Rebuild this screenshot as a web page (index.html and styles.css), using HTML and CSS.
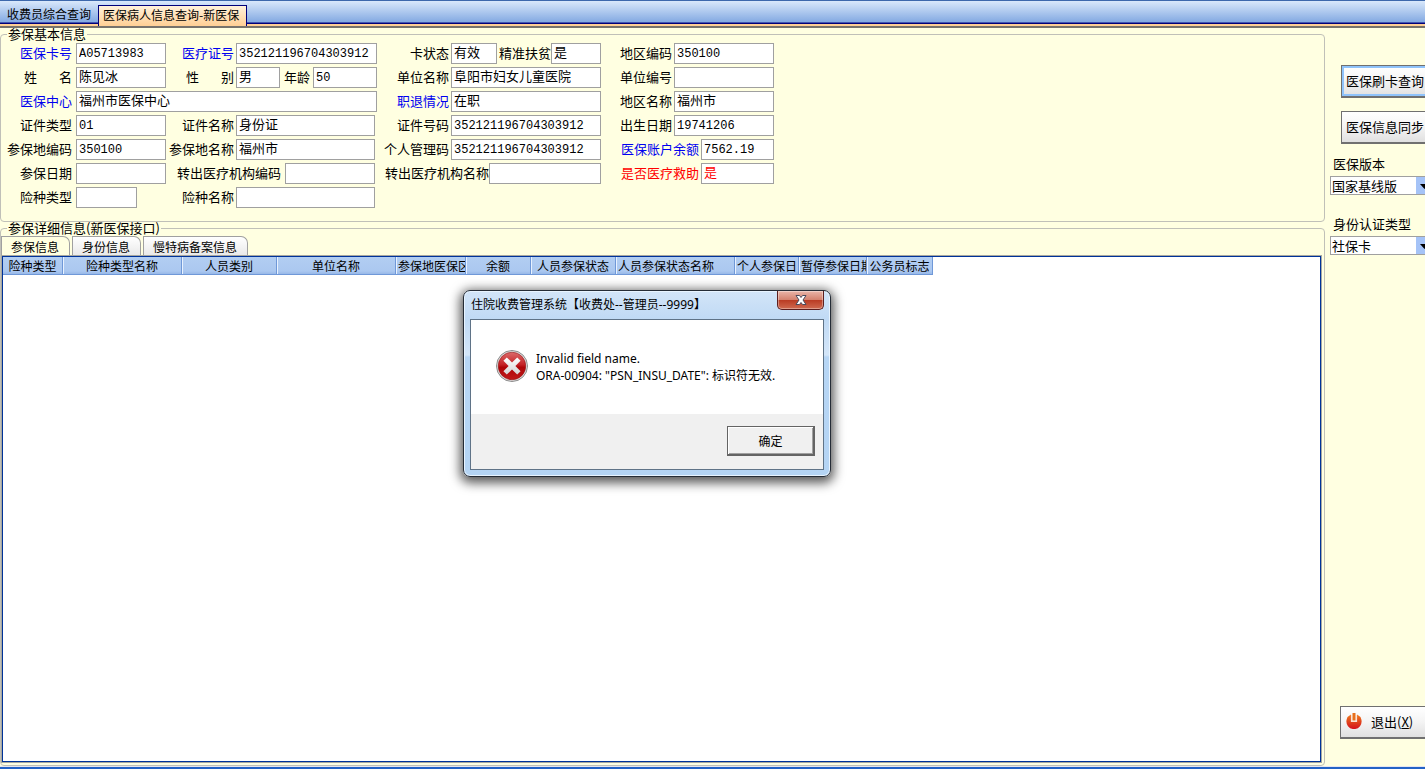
FILE: index.html
```html
<!DOCTYPE html>
<html lang="zh-CN">
<head>
  <meta charset="UTF-8">
  <meta name="viewport" content="width=device-width, initial-scale=1.0">
  <title>医保病人信息查询-新医保</title>
  <link rel="stylesheet" href="styles.css">
</head>
<body>
  <nav class="window-tabs">
    <button class="window-tab" type="button">收费员综合查询</button>
    <button class="window-tab active" type="button">医保病人信息查询-新医保</button>
  </nav>

  <div class="workspace">
    <main class="main">
      <fieldset class="group basic">
        <legend>参保基本信息</legend>
        <div class="form-grid">
          <!-- row 1 -->
          <div class="cell c1"><label class="blue" for="cardNo">医保卡号</label><input class="num fill" id="cardNo" value="A05713983"></div>
          <div class="cell c2"><label class="blue" for="certNo">医疗证号</label><input class="num fill" id="certNo" value="352121196704303912"></div>
          <div class="cell c3"><label for="cardState">卡状态</label><input class="w46" id="cardState" value="有效"><label class="inline" for="poverty">精准扶贫</label><input class="fill" id="poverty" value="是"></div>
          <div class="cell c4"><label for="areaCode">地区编码</label><input class="num fill" id="areaCode" value="350100"></div>
          <!-- row 2 -->
          <div class="cell c1"><label for="name">姓&emsp;&ensp;&thinsp;名</label><input class="fill" id="name" value="陈见冰"></div>
          <div class="cell c2"><label for="sex">性&emsp;&ensp;&thinsp;别</label><input class="w44" id="sex" value="男"><label class="inline" for="age">年龄</label><input class="num fill" id="age" value="50"></div>
          <div class="cell c3"><label for="unitName">单位名称</label><input class="fill" id="unitName" value="阜阳市妇女儿童医院"></div>
          <div class="cell c4"><label for="unitNo">单位编号</label><input class="fill" id="unitNo"></div>
          <!-- row 3 -->
          <div class="cell c1 span2"><label class="blue" for="center">医保中心</label><input class="fill" id="center" value="福州市医保中心"></div>
          <div class="cell c3"><label class="blue" for="retire">职退情况</label><input class="fill" id="retire" value="在职"></div>
          <div class="cell c4"><label for="areaName">地区名称</label><input class="fill" id="areaName" value="福州市"></div>
          <!-- row 4 -->
          <div class="cell c1"><label for="idType">证件类型</label><input class="num fill" id="idType" value="01"></div>
          <div class="cell c2 short"><label for="idName">证件名称</label><input class="fill" id="idName" value="身份证"></div>
          <div class="cell c3"><label for="idNo">证件号码</label><input class="num fill" id="idNo" value="352121196704303912"></div>
          <div class="cell c4"><label for="birth">出生日期</label><input class="num fill" id="birth" value="19741206"></div>
          <!-- row 5 -->
          <div class="cell c1"><label for="insuCode">参保地编码</label><input class="num fill" id="insuCode" value="350100"></div>
          <div class="cell c2 short"><label for="insuArea">参保地名称</label><input class="fill" id="insuArea" value="福州市"></div>
          <div class="cell c3"><label for="personNo">个人管理码</label><input class="num fill" id="personNo" value="352121196704303912"></div>
          <div class="cell c4"><label class="blue long" for="balance">医保账户余额</label><input class="num fill" id="balance" value="7562.19"></div>
          <!-- row 6 -->
          <div class="cell c1"><label for="insuDate">参保日期</label><input class="fill" id="insuDate"></div>
          <div class="cell c2 short"><label class="long" for="outCode">转出医疗机构编码</label><input class="fill" id="outCode"></div>
          <div class="cell c3 tight"><label class="long" for="outName">转出医疗机构名称</label><input class="fill" id="outName"></div>
          <div class="cell c4"><label class="red long" for="rescue">是否医疗救助</label><input class="red fill" id="rescue" value="是"></div>
          <!-- row 7 -->
          <div class="cell c1"><label for="kindType">险种类型</label><input class="w60" id="kindType"></div>
          <div class="cell c2 short"><label for="kindName">险种名称</label><input class="fill" id="kindName"></div>
        </div>
      </fieldset>

      <fieldset class="group detail">
        <legend>参保详细信息(新医保接口)</legend>
        <div class="sub-tabs">
          <button class="sub-tab active" type="button">参保信息</button>
          <button class="sub-tab" type="button">身份信息</button>
          <button class="sub-tab" type="button">慢特病备案信息</button>
        </div>
        <div class="grid-box">
          <table>
            <colgroup>
              <col class="col-60"><col class="col-119"><col class="col-95"><col class="col-119">
              <col class="col-70"><col class="col-65"><col class="col-85"><col class="col-119">
              <col class="col-64"><col class="col-68"><col class="col-66">
            </colgroup>
            <thead>
              <tr>
                <th>险种类型</th>
                <th>险种类型名称</th>
                <th>人员类别</th>
                <th>单位名称</th>
                <th class="left">参保地医保区</th>
                <th>余额</th>
                <th>人员参保状态</th>
                <th class="left">人员参保状态名称</th>
                <th class="left">个人参保日</th>
                <th class="left">暂停参保日期</th>
                <th>公务员标志</th>
              </tr>
            </thead>
          </table>
        </div>
      </fieldset>
    </main>

    <aside class="side">
      <button class="btn focused" type="button">医保刷卡查询</button>
      <button class="btn" type="button">医保信息同步</button>
      <label class="side-label" for="version">医保版本</label>
      <div class="combo">
        <select id="version"><option>国家基线版</option></select>
        <svg width="17" height="17" viewBox="0 0 17 17"><rect width="17" height="17" fill="#a5c3f7"/><path d="M4 7h9L8.500 12z" fill="#000"/></svg>
      </div>
      <label class="side-label second" for="authType">身份认证类型</label>
      <div class="combo">
        <select id="authType"><option>社保卡</option></select>
        <svg width="17" height="17" viewBox="0 0 17 17"><rect width="17" height="17" fill="#a5c3f7"/><path d="M4 7h9L8.500 12z" fill="#000"/></svg>
      </div>
      <button class="btn exit" type="button">
        <svg width="16" height="16" viewBox="0 0 16 16">
          <defs>
            <linearGradient id="power" x1="0" y1="0" x2="0" y2="1">
              <stop offset="0" stop-color="#ee7a1c"/>
              <stop offset="1" stop-color="#d4101c"/>
            </linearGradient>
          </defs>
          <path d="M5 1.500A7.600 7.600 0 1 0 11 1.500V8.500H5z" fill="url(#power)"/>
          <path d="M5.500 2v6.500h5V2" fill="none" stroke="#fbe3d6" stroke-width="1.200"/>
          <rect x="6.500" y="0" width="3" height="7.500" fill="#e8701c"/>
        </svg>
        <span>退出(<u>X</u>)</span>
      </button>
    </aside>
  </div>

  <div class="status-line"></div>

  <div class="dialog" role="alertdialog" aria-labelledby="dialogTitle">
    <div class="dialog-title">
      <span id="dialogTitle">住院收费管理系统【收费处--管理员--9999】</span>
      <button class="dialog-close" type="button" aria-label="关闭">
        <svg width="12" height="10" viewBox="0 0 12 10">
          <path d="M1 .5h3.500L6 2.500 7.500.5H11L8 5l3 4.500H7.500L6 7.500 4.500 9.500H1L4 5z" fill="#fff" stroke="#4a4a5c" stroke-width="1"/>
        </svg>
      </button>
    </div>
    <div class="dialog-client">
      <div class="dialog-body">
        <svg width="32" height="32" viewBox="0 0 32 32">
          <defs>
            <linearGradient id="err" x1="0" y1="0" x2="0" y2="1">
              <stop offset="0" stop-color="#dc6a6a"/>
              <stop offset=".45" stop-color="#c42226"/>
              <stop offset=".55" stop-color="#ae0508"/>
              <stop offset="1" stop-color="#c01a1a"/>
            </linearGradient>
            <linearGradient id="cross" x1="0" y1="0" x2="0" y2="1">
              <stop offset="0" stop-color="#fff"/>
              <stop offset="1" stop-color="#d4d4d4"/>
            </linearGradient>
          </defs>
          <circle cx="16" cy="16" r="15.500" fill="#e4e4e4" stroke="#8c8c8c"/>
          <circle cx="16" cy="16" r="13.800" fill="url(#err)" stroke="#8e1214" stroke-width=".6"/>
          <path d="M10.800 7.400L16 12.600l5.200-5.200 3.400 3.400L19.400 16l5.200 5.200-3.400 3.400L16 19.400l-5.200 5.200-3.400-3.400L12.600 16l-5.200-5.200z" fill="url(#cross)"/>
        </svg>
        <p>Invalid field name.<br>ORA-00904: "PSN_INSU_DATE": 标识符无效.</p>
      </div>
      <div class="dialog-footer">
        <button class="dialog-ok" type="button">确定</button>
      </div>
    </div>
  </div>
</body>
</html>
```
FILE: styles.css
```css
* {
  box-sizing: border-box;
}

body {
  margin: 0;
  height: 100vh;
  display: flex;
  flex-direction: column;
  overflow: hidden;
  background: #ffffe1;
  color: #000;
  font-family: "Noto Sans CJK SC", sans-serif;
  font-size: 13px;
}

button, input, select {
  margin: 0;
  font-family: inherit;
  font-size: inherit;
  color: inherit;
  border-radius: 0;
}

/* window tabs */
.window-tabs {
  flex: none;
  display: flex;
  align-items: flex-end;
  height: 28px;
  border-top: 1px solid #3d68ac;
  border-bottom: 2px solid #77736c;
  background: linear-gradient(#d9e8fb, #84aae2 21px, #00007b 22px, #00007b 23px, #ffcf94 23px);
}

.window-tab {
  height: 19px;
  margin-bottom: 3px;
  padding: 0 7px;
  border: 0;
  background: none;
  font-size: 12px;
  line-height: 17px;
  white-space: nowrap;
}

.window-tab.active {
  height: 21px;
  margin-bottom: 0;
  padding: 0 7px 3px 4px;
  border: 1px solid #00007b;
  border-bottom: 0;
  background: linear-gradient(#fff2dc, #ffcf94);
}

/* layout */
.workspace {
  flex: 1;
  min-height: 0;
  display: flex;
}

.main {
  flex: 1;
  min-width: 0;
  display: flex;
  flex-direction: column;
}

.side {
  flex: none;
  width: 100px;
  padding: 37px 0 27px 5px;
  overflow: hidden;
  display: flex;
  flex-direction: column;
}

.status-line {
  flex: none;
  height: 3px;
  border-top: 1px solid #e6e6ee;
  background: #2362c6;
}

.group {
  min-width: 0;
  margin: 0;
  border: 1px solid #c0c0b8;
  border-radius: 4px;
}

.group legend {
  height: 12px;
  margin-left: 6px;
  padding: 0 1px;
  line-height: 12px;
}

/* basic info form */
.basic {
  padding: 3px 0 13px;
}

.form-grid {
  display: grid;
  grid-template-columns: 165px 211px 224px 173px;
  row-gap: 3px;
}

.cell {
  display: flex;
  gap: 2px;
  height: 21px;
}

.cell.c1 {
  gap: 4px;
}

.cell label {
  flex: none;
  line-height: 20px;
  text-align: right;
  white-space: nowrap;
}

.cell.c1 label { width: 71px; }
.cell.c2 label { width: 68px; }
.cell.c3 label { width: 72px; }
.cell.c4 label { width: 71px; }
.cell.c2 label.long { width: 115px; margin-right: 2px; }
.cell.c3 label.long { width: 112px; }
.cell.c4 label.long { width: 98px; }

.cell.c2 label.inline {
  width: auto;
  margin: 0 1px 0 2px;
}

.cell.c3 label.inline {
  width: auto;
  margin-right: -2px;
}

.cell.span2 {
  grid-column: span 2;
}

.cell.short {
  padding-right: 2px;
}

.cell.tight {
  gap: 0;
}

.cell input {
  min-width: 0;
  height: 21px;
  padding: 0 2px 4px;
  border: 1px solid #a0a0a0;
  background: #fff;
}

.cell input.num {
  padding-bottom: 0;
  font-family: "Liberation Mono", monospace;
  font-size: 12px;
}

.cell input.fill { flex: 1; }
.cell input.w44 { width: 44px; }
.cell input.w46 { width: 46px; }
.cell input.w60 { width: 61px; }

.blue { color: #0000f0; }
.red { color: #f00; }

/* detail info */
.detail {
  flex: 1;
  min-height: 0;
  padding: 2px 3px 3px 0;
  display: flex;
  flex-direction: column;
}

.sub-tabs {
  flex: none;
  display: flex;
  gap: 2px;
}

.sub-tab {
  height: 20px;
  padding: 0 10px 0 9px;
  border: 1px solid #a0a0a0;
  border-bottom: 0;
  border-top-right-radius: 7px;
  background: linear-gradient(#fff, #e8e8e8);
  font-size: 12px;
  line-height: 18px;
}

.sub-tab.active {
  background: #ffffe1;
}

.grid-box {
  flex: 1;
  min-height: 0;
  margin-left: 1px;
  overflow: hidden;
  border: 1px solid #003399;
  background: #fff;
  box-shadow: 0 0 0 1px #a8a8a0;
}

table {
  width: 930px;
  table-layout: fixed;
  border-collapse: separate;
  border-spacing: 0;
}

th {
  height: 18px;
  padding: 0;
  overflow: hidden;
  border-right: 1px solid #6f98d8;
  border-bottom: 1px solid #6f98d8;
  background: linear-gradient(#b2cef2, #abc8f0 14px, #98b8e8);
  font-size: 12px;
  font-weight: normal;
  line-height: 17px;
  white-space: nowrap;
}

th + th {
  box-shadow: inset 1px 0 #e8f2ff;
}

th.left {
  padding-left: 2px;
  text-align: left;
}

.col-60 { width: 60px; }
.col-64 { width: 64px; }
.col-65 { width: 65px; }
.col-66 { width: 66px; }
.col-68 { width: 68px; }
.col-70 { width: 70px; }
.col-85 { width: 85px; }
.col-95 { width: 95px; }
.col-119 { width: 119px; }

/* right side */
.btn {
  flex: none;
  width: 88px;
  height: 33px;
  margin: 0 0 13px 11px;
  padding: 0 0 2px;
  border: 1px solid #707070;
  border-bottom-width: 2px;
  background: linear-gradient(#fff, #f4f4f4 50%, #e0e0e0);
  white-space: nowrap;
}

.btn.focused {
  box-shadow: inset 0 0 0 2px #8fc3fb;
}

.btn.exit {
  display: flex;
  align-items: center;
  gap: 9px;
  width: 92px;
  margin: auto 0 0 10px;
  padding-left: 5px;
}

.side-label {
  margin: 0 0 5px 3px;
  line-height: 14px;
  white-space: nowrap;
}

.side-label.second {
  margin-top: 22px;
}

.combo {
  position: relative;
  flex: none;
  width: 104px;
}

.combo select {
  display: block;
  width: 100%;
  height: 19px;
  padding: 0 1px;
  border: 1px solid #a0a0a0;
  background: #fff;
  line-height: 15px;
  appearance: none;
}

.combo svg {
  position: absolute;
  top: 1px;
  right: 1px;
  pointer-events: none;
}

/* error dialog */
.dialog {
  position: absolute;
  left: 463px;
  top: 290px;
  width: 368px;
  padding: 0 6px 6px;
  border: 1px solid #252c36;
  border-radius: 7px;
  background: linear-gradient(#d3e5f8, #c0daf5 28px, #d4e6f9 64px, #b7d6f5 66px, #b4d4f4);
  box-shadow: inset 0 0 0 1px #e8f4ff, 0 3px 11px 3px rgba(0, 0, 0, 0.65);
  font-family: "Noto Sans", "Noto Sans CJK SC", sans-serif;
  font-size: 12px;
}

.dialog-title {
  display: flex;
  justify-content: space-between;
  height: 28px;
  padding-left: 1px;
  line-height: 28px;
}

.dialog-close {
  display: flex;
  align-items: center;
  justify-content: center;
  width: 47px;
  height: 19px;
  padding: 0;
  border: 1px solid #5c1e1e;
  border-top: 0;
  border-radius: 0 0 5px 5px;
  background: linear-gradient(#e9b5a9, #d4826f 48%, #b93a22 50%, #d06a50);
  box-shadow: inset 0 0 0 1px rgba(255, 255, 255, 0.35);
}

.dialog-client {
  border: 1px solid #5f7387;
  background: #f0f0f0;
}

.dialog-body {
  display: flex;
  gap: 8px;
  height: 94px;
  padding: 30px 24px 0 25px;
  background: #fff;
}

.dialog-body svg {
  flex: none;
}

.dialog-body p {
  margin: 0;
  line-height: 17px;
  white-space: nowrap;
}

.dialog-footer {
  display: flex;
  justify-content: flex-end;
  padding: 12px 8px 13px;
}

.dialog-ok {
  width: 88px;
  height: 30px;
  padding: 0;
  border: 1px solid #646464;
  border-right-width: 2px;
  border-bottom-width: 2px;
  background: #f0f0f0;
  box-shadow: inset 1px 1px #fff, inset -1px -1px #a0a0a0;
}
```
